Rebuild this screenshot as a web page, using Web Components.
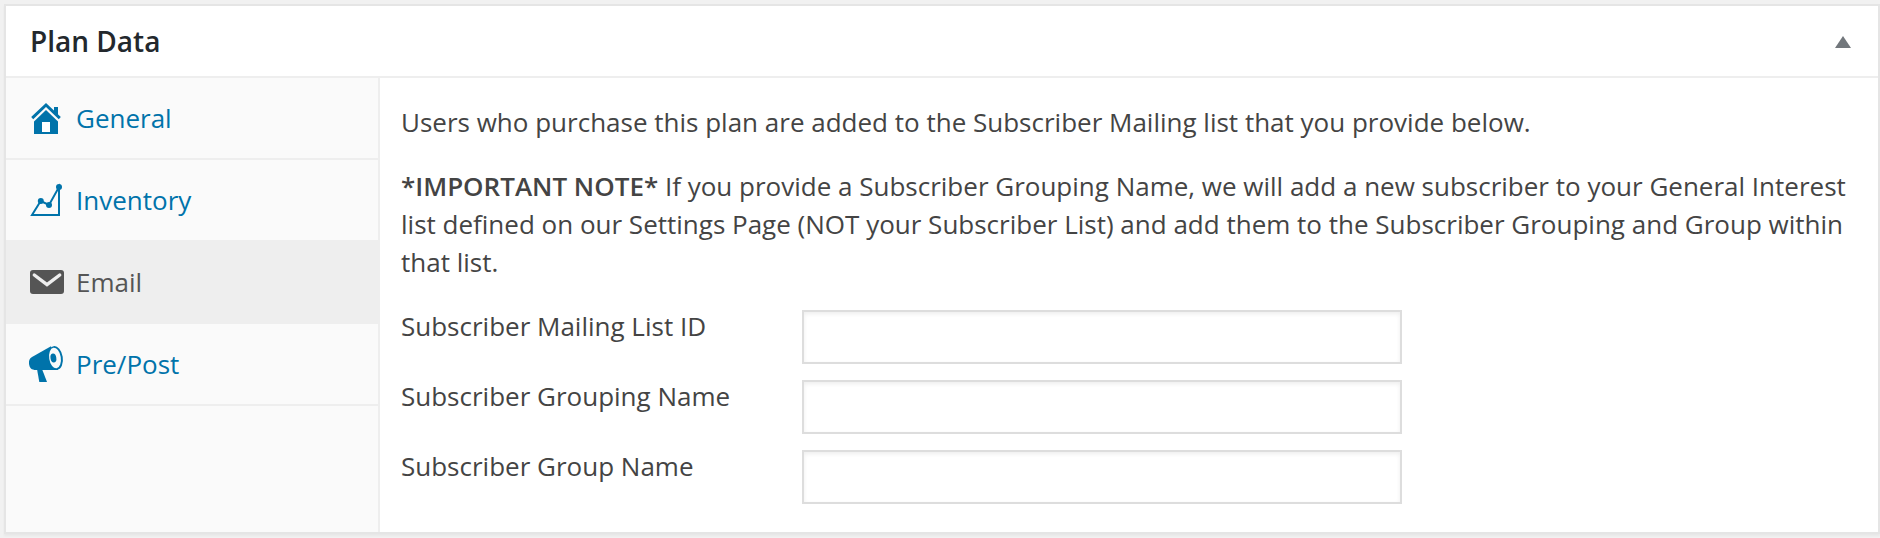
<!DOCTYPE html>
<html lang="en">
<head>
<meta charset="utf-8">
<title>Plan Data</title>
<style>
html,body{margin:0;height:100%}
body{background:#f1f1f1;font:26px/38px "Open Sans","Noto Sans",sans-serif;color:#444;overflow:hidden;padding:4px 0 0 4px;box-sizing:border-box}
</style>
</head>
<body>
<plan-box heading="Plan Data">
  <plan-tabs slot="tabs">
    <plan-tab icon="home">General</plan-tab>
    <plan-tab icon="chart">Inventory</plan-tab>
    <plan-tab icon="mail" active>Email</plan-tab>
    <plan-tab icon="horn">Pre/Post</plan-tab>
  </plan-tabs>
  <plan-panel>
    <plan-note>Users who purchase this plan are added to the Subscriber Mailing list that you provide below.</plan-note>
    <plan-note><strong>*IMPORTANT NOTE*</strong> If you provide a Subscriber Grouping Name, we will add a new subscriber to your General Interest list defined on our Settings Page (NOT your Subscriber List) and add them to the Subscriber Grouping and Group within that list.</plan-note>
    <plan-field label="Subscriber Mailing List ID"></plan-field>
    <plan-field label="Subscriber Grouping Name"></plan-field>
    <plan-field label="Subscriber Group Name"></plan-field>
  </plan-panel>
</plan-box>
<script>
const define = (name, render) => customElements.define(name, class extends HTMLElement {
  constructor() {
    super();
    this.attachShadow({ mode: 'open' });
  }
  connectedCallback() {
    this.shadowRoot.innerHTML = render(this);
  }
});

const icons = {
  home: `<path d="M26 9h4v9l-4-4z"/>
    <path d="M4.2 20.2 18 7l13.8 13.2" fill="none" stroke="currentColor" stroke-width="3"/>
    <path d="M18 12 30 23.5V36H6V23.5z"/><path d="M14 24h8v10h-8z" fill="#fff"/>`,
  chart: `<path d="M4 35 12.7 21 21 25 31 7V35z" fill="none" stroke="currentColor" stroke-width="2"/>
    <circle cx="12.8" cy="21" r="3"/><circle cx="21" cy="25" r="3"/><circle cx="31" cy="7" r="3"/>`,
  mail: `<rect x="2" y="8" width="34" height="24" rx="3"/>
    <path d="M6.3 13 19 22.6 31.7 13" fill="none" stroke="#eee" stroke-width="3.4" stroke-linecap="round"/>`,
  horn: `<path d="M23 2.3 4 13C1.4 14.6.8 16.5 1 19.5 1.4 24 3.5 26 8 26H30z"/>
    <path d="M9 25 11.3 38H19L14 25z"/>
    <ellipse cx="27.5" cy="14" rx="7.3" ry="12" transform="rotate(-9 27.5 14)"/>
    <ellipse cx="27" cy="14" rx="5.8" ry="10.4" transform="rotate(-9 27 14)" fill="#fafafa"/>
    <ellipse cx="25.4" cy="14" rx="2.9" ry="4.6" transform="rotate(-9 25.4 14)"/>`
};

define('plan-box', el => `<style>
  :host{display:flex;flex-direction:column;box-sizing:border-box;height:530px;background:#fff;border:2px solid #e5e5e5;box-shadow:0 2px 2px rgba(0,0,0,.04)}
  header{display:flex;align-items:center;justify-content:space-between;height:70px;padding:0 27px 0 24px;border-bottom:2px solid #eee}
  h2{margin:0;font-size:28px;font-weight:600;line-height:38px;color:#23282d}
  svg{display:block;width:16px;height:12px;margin-top:2px;fill:#72777c}
  main{display:flex;flex:1;min-height:0}
  </style><header><h2>${el.getAttribute('heading')}</h2><svg viewBox="0 0 16 12"><path d="M8 0 16 12H0z"/></svg></header>
  <main><slot name="tabs"></slot><slot></slot></main>`);

define('plan-tabs', () => `<style>
  :host{display:flex;flex-direction:column;box-sizing:border-box;flex:none;width:374px;background:#fafafa;border-right:2px solid #eee}
  </style><slot></slot>`);

define('plan-tab', el => `<style>
  :host{display:flex;align-items:center;gap:12px;height:80px;padding-left:22px;border-bottom:2px solid #eee;color:#0073aa;line-height:36px}
  :host([active]){background:#eee;color:#555}
  svg{display:block;width:36px;height:40px;fill:currentColor;overflow:visible}
  </style><svg viewBox="0 0 36 40">${icons[el.getAttribute('icon')]}</svg><span><slot></slot></span>`);

define('plan-panel', () => `<style>
  :host{display:block;flex:1;padding:25px 19px 0 21px}
  </style><slot></slot>`);

define('plan-note', () => `<style>
  :host{display:block;margin-bottom:26px}
  ::slotted(strong){font-weight:600}
  </style><slot></slot>`);

define('plan-field', el => `<style>
  :host{display:block;margin-bottom:13px}
  label{display:grid;grid-template-columns:401px 600px;align-items:start}
  input{box-sizing:border-box;width:600px;height:54px;margin:3px 0 0;padding:6px 10px;border:2px solid #ddd;border-radius:0;background:#fff;box-shadow:inset 0 2px 4px rgba(0,0,0,.07);font:inherit;color:#32373c;outline:0}
  </style><label><span>${el.getAttribute('label')}</span><input type="text"></label>`);
</script>
</body>
</html>
